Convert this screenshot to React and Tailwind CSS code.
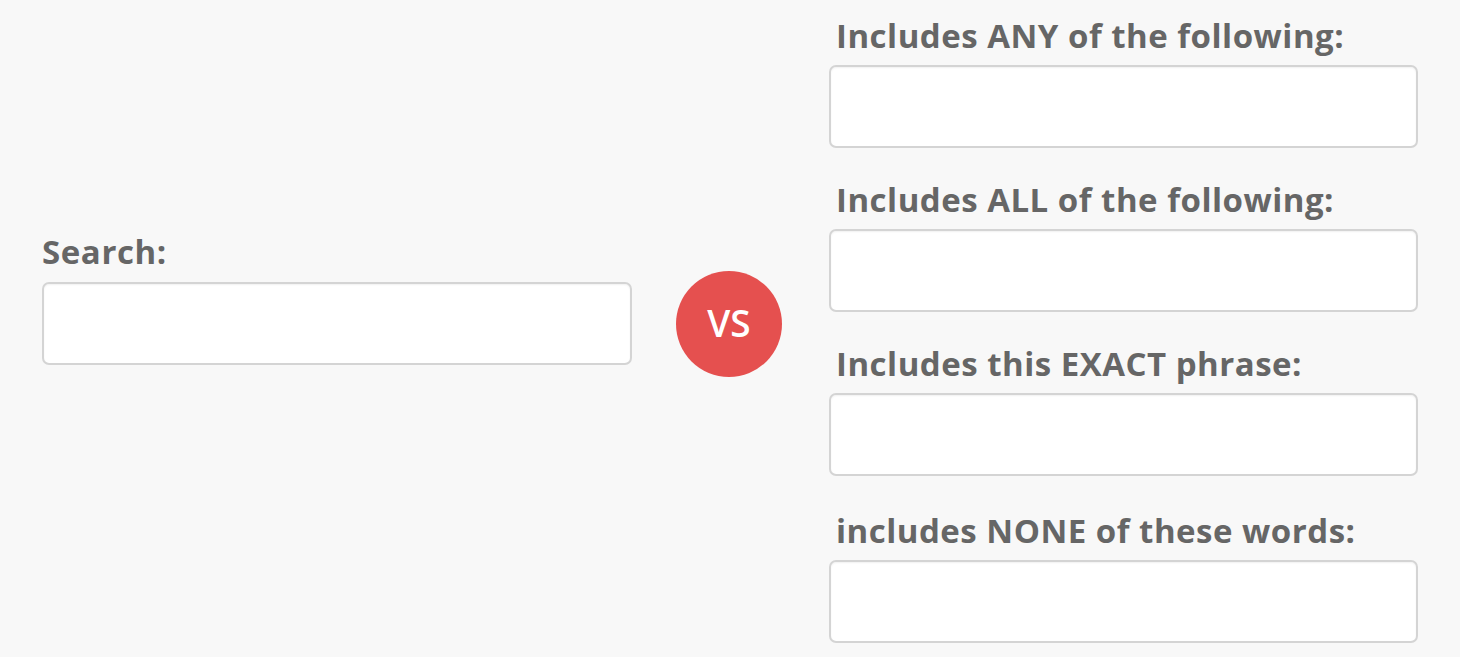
const fields = [
  'Includes ANY of the following:',
  'Includes ALL of the following:',
  'Includes this EXACT phrase:',
  'includes NONE of these words:',
];

const inputClass =
  'block h-[83px] w-full rounded-[7px] border-2 border-[#d4d4d4] bg-white shadow-[inset_0_1px_2px_rgba(0,0,0,0.06)] outline-none';

const labelClass =
  'block pl-[7px] text-[33px] font-bold leading-[40px] tracking-[0.5px] text-[#666666]';

const App = () => {
  return (
    <div
      className="flex h-[657px] w-full overflow-hidden bg-[#f8f8f8] px-[42px]"
      style={{ fontFamily: '"Open Sans", Lato, sans-serif' }}
    >
      {/* Left: simple search */}
      <div className="w-[590px] pt-[232px]">
        <label className="block text-[33px] font-bold leading-[40px] tracking-[0.6px] text-[#666666]">Search:</label>
        <input className={`mt-[10px] ${inputClass}`} />
      </div>

      {/* VS badge */}
      <div className="ml-[44px] mr-[47px] pt-[271px]">
        <div className="flex h-[106px] w-[106px] items-center justify-center rounded-full bg-[#e5504f] pb-[2px] text-[37px] font-semibold text-white">
          VS
        </div>
      </div>

      {/* Right: advanced fields */}
      <div className="flex w-[589px] flex-col gap-[32px] pt-[16px]">
        {fields.map((f, i) => (
          <div key={f} className={i === 3 ? 'mt-[3px]' : ''}>
            <label className={labelClass}>{f}</label>
            <input className={`mt-[9px] ${inputClass}`} />
          </div>
        ))}
      </div>
    </div>
  );
};

export default App;
